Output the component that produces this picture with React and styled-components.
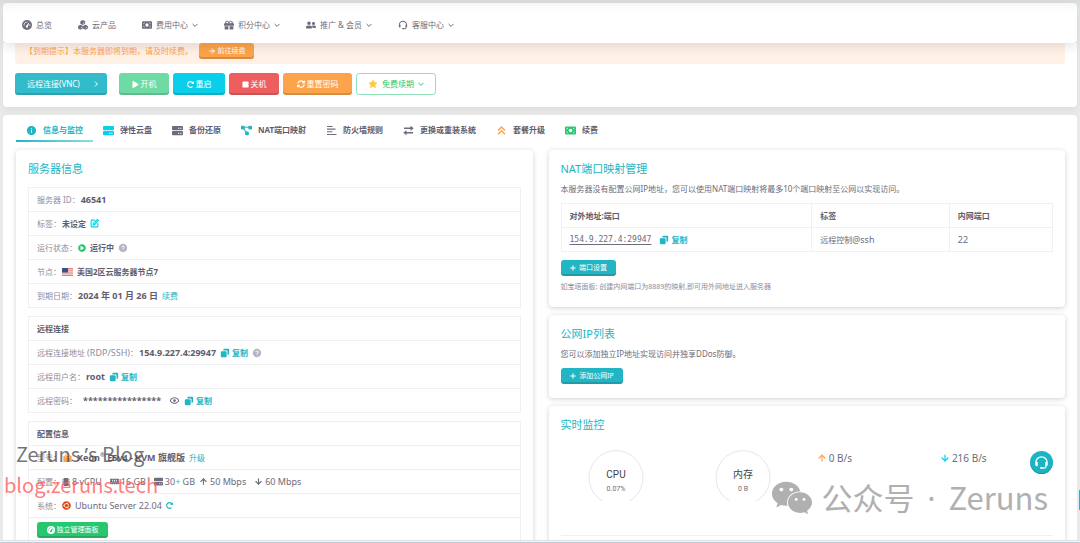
import React from "react";
import styled, { createGlobalStyle, css } from "styled-components";
import {
  BiShow,
  BiSolidCopy,
  BiSolidHelpCircle,
  BiSolidInfoCircle,
  BiSolidShoppingBag,
  BiSolidStar,
  BiSupport,
} from "react-icons/bi";
import {
  FaGift,
  FaMemory,
  FaMicrochip,
  FaPlay,
  FaPlayCircle,
  FaRedoAlt,
  FaStop,
  FaSyncAlt,
  FaUbuntu,
  FaUserFriends,
  FaWeixin,
} from "react-icons/fa";
import { ArrowDown, ArrowRight, ArrowUp, Plus, SquarePen } from "lucide-react";

const teal = "#22b5c3";
const cyan = "#0acfea";
const orange = "#fda34b";
const green = "#28c76f";
const text = "#6e6b7b";
const strong = "#605d6e";
const muted = "#8f8d9b";
const line = "#f0f0f3";

const GlobalStyle = createGlobalStyle`
  * {
    box-sizing: border-box;
  }

  body {
    margin: 0;
    background: #ececec;
    color: ${text};
    font-family: "Noto Sans", "Noto Sans CJK SC", sans-serif;
    font-size: 8px;
    line-height: 12px;
  }

  a {
    color: inherit;
    text-decoration: none;
  }

  button {
    font-family: inherit;
    cursor: pointer;
  }

  svg {
    flex-shrink: 0;
  }
`;

const Page = styled.div`
  position: relative;
  display: flex;
  flex-direction: column;
  height: 100vh;
  overflow: hidden;
  padding: 3px 3px 0;
  background: linear-gradient(#d9dddc 0, #e9e9e9 12px);
`;

const NavBar = styled.nav`
  position: relative;
  z-index: 2;
  display: flex;
  flex-shrink: 0;
  align-items: center;
  gap: 26px;
  height: 40px;
  padding: 4px 19px 0;
  border-radius: 4px;
  background: linear-gradient(#f7f7f7, #fff 10px);
  box-shadow: 0 4px 12px rgba(0, 0, 0, 0.1);
`;

const NavLink = styled.a`
  display: flex;
  align-items: center;
  gap: 4px;
  white-space: nowrap;
`;

const Panel = styled.section`
  flex-shrink: 0;
  margin-bottom: 8px;
  padding: 0 12px 12px;
  border-radius: 0 0 4px 4px;
  background: #fff;
  box-shadow: 0 3px 8px rgba(0, 0, 0, 0.05);
`;

const Alert = styled.div`
  display: flex;
  align-items: center;
  gap: 6px;
  height: 27px;
  margin-top: -6px;
  padding-left: 10px;
  border-radius: 3px;
  background: #fff1e6;
  color: ${orange};
`;

const Actions = styled.div`
  display: flex;
  gap: 4px;
  margin-top: 9px;
`;

const Button = styled.button`
  display: inline-flex;
  align-items: center;
  justify-content: center;
  gap: 2px;
  min-width: ${({ $width }) => $width}px;
  height: 22px;
  margin: 0;
  padding: 0 10px;
  border: 0;
  border-radius: 3px;
  background: ${({ $color }) => $color};
  box-shadow: inset 0 -2px 0 rgba(34, 41, 47, 0.18);
  color: #fff;
  font-size: 8px;
  line-height: 12px;
  white-space: nowrap;

  ${({ $small }) =>
    $small &&
    css`
      height: 16px;
      padding: 0 8px;
      font-size: 7px;
    `}

  ${({ $outline }) =>
    $outline &&
    css`
      border: 1px solid #8fe0b6;
      background: #fff;
      box-shadow: none;
      color: ${green};
      gap: 4px;
    `}
`;

const ConnectButton = styled(Button)`
  justify-content: space-between;
  margin-right: 8px;
  padding: 0 8px 0 12px;
`;

const Body = styled.main`
  flex: 1;
  min-height: 0;
  overflow: hidden;
  padding: 5px 12px 0 13px;
  border-radius: 4px 4px 0 0;
  background: #fff;
`;

const Tabs = styled.div`
  display: flex;
  height: 22px;
`;

const Tab = styled.button`
  display: flex;
  align-items: center;
  gap: 6px;
  padding: 0 10px;
  border: 0;
  border-bottom: 2px solid transparent;
  background: none;
  color: ${({ $active }) => ($active ? teal : strong)};
  font-size: 8px;
  font-weight: bold;
  line-height: 12px;
  white-space: nowrap;

  ${({ $active }) =>
    $active &&
    css`
      border-image: linear-gradient(to right, ${teal}, #8fdde3) 1;
    `}
`;

const Columns = styled.div`
  display: grid;
  grid-template-columns: 1fr 1fr;
  align-items: start;
  gap: 16px;
  margin-top: 8px;
`;

const Stack = styled.div`
  display: flex;
  flex-direction: column;
  gap: 8px;
`;

const Card = styled.section`
  min-width: 0;
  padding: 11px 12px 14px;
  border-radius: 4px;
  background: #fff;
  box-shadow: 0 1px 5px rgba(34, 41, 47, 0.22);
`;

const Title = styled.h2`
  margin: 0;
  color: ${teal};
  font-size: 11px;
  font-weight: normal;
  line-height: 16px;
`;

const Paragraph = styled.p`
  margin: 6px 0 8px;
`;

const List = styled.ul`
  margin: 10px 0 0;
  padding: 0;
  border: 1px solid ${line};
  border-bottom: 0;
  list-style: none;

  & + & {
    margin-top: 8px;
  }
`;

const Row = styled.li`
  display: flex;
  align-items: center;
  gap: 4px;
  height: 24px;
  padding: 0 8px;
  border-bottom: 1px solid ${line};
  white-space: nowrap;
`;

const Label = styled.span`
  margin-right: ${({ $gap }) => ($gap ? 2 : -3)}px;
  color: ${muted};
`;

const Latin = styled.span`
  font-size: 9px;
`;

const Value = styled.strong`
  color: ${strong};
  font-size: ${({ $latin }) => ($latin ? 9 : 8)}px;

  sup {
    font-size: 6px;
    line-height: 0;
  }
`;

const Spec = styled.span`
  display: inline-flex;
  align-items: center;
  gap: 2px;
  font-size: 9px;
`;

const Link = styled.a`
  color: ${teal};
`;

const CopyButton = styled.button`
  display: inline-flex;
  align-items: center;
  gap: 2px;
  padding: 0;
  border: 0;
  background: none;
  color: ${teal};
  font-size: 8px;
  font-weight: bold;
  line-height: 12px;
`;

const PortTable = styled.table`
  width: 100%;
  margin-bottom: 8px;
  border-collapse: collapse;
  table-layout: fixed;
  text-align: left;

  th,
  td {
    height: 24px;
    padding: 0 8px;
    border: 1px solid ${line};
  }

  th {
    color: ${strong};
  }

  th:nth-child(2) {
    width: 28%;
  }

  th:nth-child(3) {
    width: 21%;
  }
`;

const Address = styled.span`
  margin-right: 8px;
  font-family: "DejaVu Sans Mono", monospace;
  text-decoration: underline;
  text-underline-offset: 2px;
`;

const AddressCell = styled.div`
  display: flex;
  align-items: center;
`;

const Note = styled.small`
  display: block;
  margin-top: 5px;
  color: ${muted};
  font-size: 7px;
`;

const Meters = styled.div`
  display: grid;
  grid-template-columns: 127fr 119fr 123fr 123fr;
  height: 103px;
  padding-top: 17px;
  border-bottom: 1px solid ${line};
`;

const GaugeBox = styled.div`
  padding-left: 27px;

  text {
    fill: #444;
    font-family: Roboto, "Noto Sans CJK SC", sans-serif;
    font-size: 10px;
    text-anchor: middle;
  }

  text + text {
    fill: ${text};
    font-size: 7px;
  }
`;

const Rate = styled.div`
  display: flex;
  align-items: center;
  gap: 2px;
  height: 16px;
  padding-left: 10px;
  font-size: 10px;
`;

const Support = styled.button`
  position: absolute;
  right: 27px;
  bottom: 69px;
  display: flex;
  align-items: center;
  justify-content: center;
  width: 23px;
  height: 23px;
  padding: 0;
  border: 0;
  border-radius: 50%;
  background: #1cb4c2;
  box-shadow: inset 0 -1px 1px rgba(0, 0, 0, 0.2);
  color: #fff;
`;

const ScrollMark = styled.div`
  position: absolute;
  right: 0;
  bottom: 33px;
  width: 1px;
  height: 20px;
  background: ${teal};
`;

const Watermark = styled.div`
  position: absolute;
  left: 16px;
  bottom: 73px;
  color: rgba(70, 70, 70, 0.75);
  font-family: "Noto Sans CJK SC", sans-serif;
  font-size: 20px;
  line-height: 30px;
  white-space: pre;
`;

const SiteMark = styled(Watermark)`
  left: 4px;
  bottom: 43px;
  color: rgba(255, 90, 90, 0.8);
`;

const Account = styled.div`
  position: absolute;
  right: 32px;
  bottom: 23px;
  display: flex;
  align-items: center;
  gap: 8px;
  color: #b0b0b0;
  font-family: "Noto Sans CJK SC", sans-serif;
  font-size: 31px;
  line-height: 44px;
  white-space: pre;
`;

const Punctuation = styled.span`
  padding: 0 ${({ $space }) => $space || 0}px;
  font-family: "Noto Sans", sans-serif;
`;

const BottomEdge = styled.div`
  flex-shrink: 0;
  height: 3px;
  margin: 0 -3px;
  border-top: 1px solid #e2e2e2;
  border-bottom: 1px solid #bccbd8;
  background: #f2f4f6;
`;

const navItems = [
  { icon: DashboardIcon, label: "总览" },
  { icon: CubesIcon, label: "云产品" },
  { icon: MoneyIcon, label: "费用中心", menu: true },
  { icon: FaGift, label: "积分中心", menu: true },
  { icon: FaUserFriends, label: "推广 & 会员", menu: true },
  { icon: BiSupport, label: "客服中心", menu: true },
];

const tabs = [
  { icon: BiSolidInfoCircle, label: "信息与监控", color: teal },
  { icon: DisksIcon, label: "弹性云盘", color: cyan },
  { icon: DisksIcon, label: "备份还原", color: text },
  { icon: NetworkIcon, label: "NAT端口映射", color: teal },
  { icon: LinesIcon, label: "防火墙规则", color: text },
  { icon: SwapIcon, label: "更换或重装系统", color: text },
  { icon: UpgradeIcon, label: "套餐升级", color: orange },
  { icon: MoneyIcon, label: "续费", color: green },
];

function DashboardIcon({ size, mark = "#fff" }) {
  return (
    <svg width={size} height={size} viewBox="0 0 20 20">
      <circle cx="10" cy="10" r="10" fill="currentColor" />
      <path
        d="M4.2 11.5A6 6 0 0 1 11 4.2M15.4 8.4a6 6 0 0 1 .3 3.4"
        fill="none"
        stroke={mark}
        strokeWidth="1.8"
        opacity="0.8"
      />
      <path d="M14.6 4.6 12 13a2.2 2.2 0 1 1-3.6-1.6z" fill={mark} />
    </svg>
  );
}

function CubesIcon({ size }) {
  return (
    <svg width={size} height={size} viewBox="0 0 20 20" fill="currentColor">
      {["translate(4.5 0)", "translate(0 9.5)", "translate(10 9.5)"].map(
        (transform) => (
          <g key={transform} transform={transform}>
            <path d="M5 0 9.8 2.4v5.2L5 10 .2 7.6V2.4z" />
            <path d="m5.4 5.4 3-1.5v2.8l-3 1.5z" fill="#fff" opacity="0.6" />
          </g>
        )
      )}
    </svg>
  );
}

function MoneyIcon({ size, color = "currentColor" }) {
  return (
    <svg width={size} height={size} viewBox="0 0 22 22">
      <rect y="3" width="22" height="16" rx="2" fill={color} />
      <circle cx="11" cy="11" r="3.6" fill="#fff" />
      <path
        d="M2.5 8.5a3 3 0 0 0 3-3M16.5 5.5a3 3 0 0 0 3 3M2.5 13.5a3 3 0 0 1 3 3M16.5 16.5a3 3 0 0 1 3-3"
        fill="none"
        stroke="#fff"
        strokeWidth="1.2"
      />
    </svg>
  );
}

function DisksIcon({ size, color = "currentColor" }) {
  return (
    <svg width={size} height={size} viewBox="0 0 22 22">
      <rect y="2" width="22" height="8.5" rx="2" fill={color} />
      <rect y="12" width="22" height="8.5" rx="2" fill={color} />
      <path d="M12 16.5h2.5M16.5 16.5H19" stroke="#fff" strokeWidth="2" />
      {color === text && (
        <path d="M12 6.5h2.5M16.5 6.5H19" stroke="#fff" strokeWidth="2" />
      )}
    </svg>
  );
}

function NetworkIcon({ size, color }) {
  return (
    <svg width={size} height={size} viewBox="0 0 12 12" fill={color}>
      <path d="M2 2.5h8M2.5 3l4 6.5" stroke={color} strokeWidth="1.2" />
      <rect x="0" y="0.8" width="4" height="4" rx="1" />
      <rect x="8" y="0.8" width="4" height="4" rx="1" />
      <rect x="4.5" y="7.2" width="4" height="4" rx="1" />
    </svg>
  );
}

function LinesIcon({ size, color }) {
  return (
    <svg width={size} height={size} viewBox="0 0 22 22">
      <path
        d="M2 3h11M2 8.3h17M2 13.6h11M2 19h19"
        stroke={color}
        strokeWidth="2.2"
      />
    </svg>
  );
}

function SwapIcon({ size, color }) {
  return (
    <svg width={size} height={size} viewBox="0 0 22 22" fill={color}>
      <path d="M2 5.2h13V1.500l6.500 5-6.500 5V7.800H2z" />
      <path d="M20 14.200H7v-3.700l-6.500 5 6.500 5v-3.700h13z" />
    </svg>
  );
}

function UpgradeIcon({ size, color }) {
  return (
    <svg width={size} height={size} viewBox="0 0 22 22">
      <path
        d="m4 11 7-7 7 7M4 18.5l7-7 7 7"
        fill="none"
        stroke={color}
        strokeWidth="2.8"
      />
    </svg>
  );
}

function Chevron({ right }) {
  return (
    <svg width="6" height="6" viewBox="0 0 6 6">
      <path
        d={right ? "M2 .6 4.4 3 2 5.4" : "M.6 2 3 4.4 5.4 2"}
        fill="none"
        stroke="currentColor"
      />
    </svg>
  );
}

function Flag() {
  return (
    <svg width="11" height="8" viewBox="0 0 11 8">
      <rect width="11" height="8" fill="#f4dcdc" />
      <path
        d="M0 .6h11M0 2.8h11M0 5h11M0 7.4h11"
        stroke="#dd8585"
        strokeWidth="1.1"
      />
      <rect width="6" height="4.5" fill="#3c4f86" />
    </svg>
  );
}

function Copy() {
  return (
    <CopyButton type="button">
      <BiSolidCopy size={10} />
      复制
    </CopyButton>
  );
}

function Help() {
  return <BiSolidHelpCircle size={10} color="#b5b3c0" />;
}

function Gauge({ name, value }) {
  return (
    <GaugeBox>
      <svg width="56" height="52" viewBox="0 0 56 52">
        <path
          d="M14.5 51A27 27 0 1 1 41.5 51"
          fill="none"
          stroke="#e6e5ee"
          strokeWidth="1"
        />
        <text x="28" y="28">
          {name}
        </text>
        <text x="28" y="41">
          {value}
        </text>
      </svg>
    </GaugeBox>
  );
}

function ServerInfo() {
  return (
    <Card>
      <Title>服务器信息</Title>
      <List>
        <Row>
          <Label>服务器 ID：</Label>
          <Value $latin>46541</Value>
        </Row>
        <Row>
          <Label>标签：</Label>
          <Value>未设定</Value>
          <SquarePen size={9} strokeWidth={3} color={cyan} />
        </Row>
        <Row>
          <Label>运行状态：</Label>
          <FaPlayCircle size={8} color={green} />
          <Value>运行中</Value>
          <Help />
        </Row>
        <Row>
          <Label>节点：</Label>
          <Flag />
          <Value>美国2区云服务器节点7</Value>
        </Row>
        <Row>
          <Label>到期日期：</Label>
          <Value $latin>2024 年 01 月 26 日</Value>
          <Link href="#renew">续费</Link>
        </Row>
      </List>
      <List>
        <Row>
          <Value>远程连接</Value>
        </Row>
        <Row>
          <Label>
            远程连接地址 <Latin>(RDP/SSH)</Latin>：
          </Label>
          <Value $latin>154.9.227.4:29947</Value>
          <Copy />
          <Help />
        </Row>
        <Row>
          <Label>远程用户名：</Label>
          <Value $latin>root</Value>
          <Copy />
        </Row>
        <Row>
          <Label $gap>远程密码：</Label>
          <Value $latin>****************</Value>
          <span />
          <BiShow size={11} />
          <Copy />
        </Row>
      </List>
      <List>
        <Row>
          <Value>配置信息</Value>
        </Row>
        <Row>
          <Label>型号：</Label>
          <BiSolidShoppingBag size={11} color={orange} />
          <Value $latin>
            Xeon<sup>®</sup> E5v4 - KVM 旗舰版
          </Value>
          <Link href="#upgrade">升级</Link>
        </Row>
        <Row>
          <Label>配置：</Label>
          <Spec>
            <FaMicrochip size={8} /> 8 vCPU
          </Spec>
          <span />
          <Spec>
            <FaMemory size={9} /> 16 GB
          </Spec>
          <span />
          <Spec>
            <DisksIcon size={9} />
            <span>
              30<Link href="#disk">+</Link> GB
            </span>
          </Spec>
          <Spec>
            <ArrowUp size={9} strokeWidth={3} />
            50 Mbps
          </Spec>
          <span />
          <Spec>
            <ArrowDown size={9} strokeWidth={3} />
            60 Mbps
          </Spec>
        </Row>
        <Row>
          <Label>系统：</Label>
          <FaUbuntu size={9} color="#dd4814" />
          <Spec>Ubuntu Server 22.04</Spec>
          <FaRedoAlt size={7} color={teal} />
        </Row>
        <Row>
          <Button type="button" $small $width={71} $color={green}>
            <DashboardIcon size={8} mark={green} />
            独立管理面板
          </Button>
        </Row>
      </List>
    </Card>
  );
}

function PortMapping() {
  return (
    <Card>
      <Title>NAT端口映射管理</Title>
      <Paragraph>
        本服务器没有配置公网IP地址，您可以使用NAT端口映射将最多10个端口映射至公网以实现访问。
      </Paragraph>
      <PortTable>
        <thead>
          <tr>
            <th>对外地址:端口</th>
            <th>标签</th>
            <th>内网端口</th>
          </tr>
        </thead>
        <tbody>
          <tr>
            <td>
              <AddressCell>
                <Address>154.9.227.4:29947</Address>
                <Copy />
              </AddressCell>
            </td>
            <td>
              远程控制<Latin>@ssh</Latin>
            </td>
            <td>
              <Latin>22</Latin>
            </td>
          </tr>
        </tbody>
      </PortTable>
      <Button type="button" $small $width={55} $color={teal}>
        <Plus size={8} strokeWidth={3} />
        端口设置
      </Button>
      <Note>如宝塔面板: 创建内网端口为8889的映射,即可用外网地址进入服务器</Note>
    </Card>
  );
}

export default function App() {
  return (
    <Page>
      <GlobalStyle />
      <NavBar>
        {navItems.map(({ icon: Icon, label, menu }) => (
          <NavLink href="#" key={label}>
            <Icon size={10} />
            {label}
            {menu && <Chevron />}
          </NavLink>
        ))}
      </NavBar>
      <Panel>
        <Alert>
          【到期提示】本服务器即将到期，请及时续费。
          <Button type="button" $small $width={55} $color={orange}>
            <ArrowRight size={8} strokeWidth={3} />
            前往续费
          </Button>
        </Alert>
        <Actions>
          <ConnectButton type="button" $width={92} $color="#32bccb">
            远程连接(VNC)
            <Chevron right />
          </ConnectButton>
          <Button type="button" $width={50} $color="#6fdba4">
            <FaPlay size={7} />
            开机
          </Button>
          <Button type="button" $width={52} $color={cyan}>
            <FaRedoAlt size={7} />
            重启
          </Button>
          <Button type="button" $width={50} $color="#ef5e5e">
            <FaStop size={7} />
            关机
          </Button>
          <Button type="button" $width={69} $color={orange}>
            <FaSyncAlt size={8} />
            重置密码
          </Button>
          <Button type="button" $width={80} $outline>
            <BiSolidStar size={10} color="#ffc83d" />
            免费续期
            <Chevron />
          </Button>
        </Actions>
      </Panel>
      <Body>
        <Tabs>
          {tabs.map(({ icon: Icon, label, color }, index) => (
            <Tab type="button" key={label} $active={index === 0}>
              <Icon size={11} color={color} />
              {label}
            </Tab>
          ))}
        </Tabs>
        <Columns>
          <ServerInfo />
          <Stack>
            <PortMapping />
            <Card>
              <Title>公网IP列表</Title>
              <Paragraph>
                您可以添加独立IP地址实现访问并独享DDos防御。
              </Paragraph>
              <Button type="button" $small $width={62} $color={teal}>
                <Plus size={8} strokeWidth={3} />
                添加公网IP
              </Button>
            </Card>
            <Card>
              <Title>实时监控</Title>
              <Meters>
                <Gauge name="CPU" value="0.07%" />
                <Gauge name="内存" value="0 B" />
                <Rate>
                  <ArrowUp size={10} strokeWidth={3} color={orange} />0 B/s
                </Rate>
                <Rate>
                  <ArrowDown size={10} strokeWidth={3} color={cyan} />
                  216 B/s
                </Rate>
              </Meters>
            </Card>
          </Stack>
        </Columns>
      </Body>
      <BottomEdge />
      <ScrollMark />
      <Watermark>
        Zeruns <Punctuation>’</Punctuation>s Blog
      </Watermark>
      <SiteMark>blog.zeruns.tech</SiteMark>
      <Account>
        <FaWeixin size={42} />
        <span>
          公众号 <Punctuation $space={6}>·</Punctuation> Zeruns
        </span>
      </Account>
      <Support type="button" aria-label="客服">
        <BiSupport size={15} />
      </Support>
    </Page>
  );
}
